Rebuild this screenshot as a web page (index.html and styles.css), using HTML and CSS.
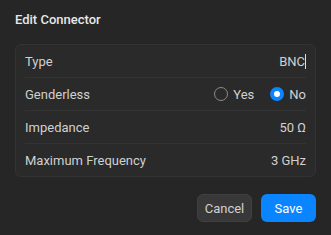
FILE: index.html
```html
<!DOCTYPE html>
<html lang="en">
<head>
    <meta charset="UTF-8">
    <title>Edit Connector</title>
    <link rel="stylesheet" href="styles.css">
</head>
<body>
    <div class="dialog">
        <h1 class="dialog-title">Edit Connector</h1>

        <div class="card">
            <div class="row">
                <span class="label">Type</span>
                <span class="value">BNC<span class="caret"></span></span>
            </div>
            <div class="row">
                <span class="label">Genderless</span>
                <span class="radios">
                    <label class="radio"><span class="dot"></span>Yes</label>
                    <label class="radio checked"><span class="dot"></span>No</label>
                </span>
            </div>
            <div class="row">
                <span class="label">Impedance</span>
                <span class="value">50 Ω</span>
            </div>
            <div class="row">
                <span class="label">Maximum Frequency</span>
                <span class="value">3 GHz</span>
            </div>
        </div>

        <div class="actions">
            <button class="btn btn-cancel">Cancel</button>
            <button class="btn btn-save">Save</button>
        </div>
    </div>
</body>
</html>
```

FILE: styles.css
```css
html, body {
    margin: 0;
    height: 100%;
    background: #262626;
}
body {
    font-family: Roboto, "Liberation Sans", sans-serif;
    color: #d8d8d8;
}
.dialog {
    padding: 12px 15px 13px;
}
.dialog-title {
    margin: 0 0 16px;
    font-size: 13px;
    font-weight: 500;
    color: #e8e8e8;
    line-height: 16px;
}
.card {
    background: #2a2a2a;
    border: 1px solid #333;
    border-radius: 6px;
    padding: 0 9px;
}
.row {
    display: flex;
    justify-content: space-between;
    align-items: center;
    height: 32px;
    border-bottom: 1px solid #333;
    font-size: 13px;
    color: #d0d0d0;
}
.row:last-child {
    border-bottom: none;
}
.value {
    display: flex;
    align-items: center;
}
.caret {
    width: 1px;
    height: 15px;
    background: #e0e0e0;
}
.radios {
    display: flex;
    gap: 16px;
}
.radio {
    display: flex;
    align-items: center;
    gap: 5px;
}
.dot {
    width: 12px;
    height: 12px;
    border: 1px solid #8a8a8a;
    border-radius: 50%;
}
.radio.checked .dot {
    width: 6px;
    height: 6px;
    border: 4px solid #0a84ff;
    background: #fff;
}
.actions {
    display: flex;
    justify-content: flex-end;
    gap: 9px;
    margin-top: 17px;
}
.btn {
    font-family: Roboto, "Liberation Sans", sans-serif;
    font-size: 13px;
    height: 28px;
    width: 55px;
    padding: 0;
    border: none;
    border-radius: 6px;
    cursor: pointer;
}
.btn-cancel {
    background: #383838;
    border: 1px solid #404040;
    color: #d0d0d0;
}
.btn-save {
    background: #0a84ff;
    color: #fff;
}
```
